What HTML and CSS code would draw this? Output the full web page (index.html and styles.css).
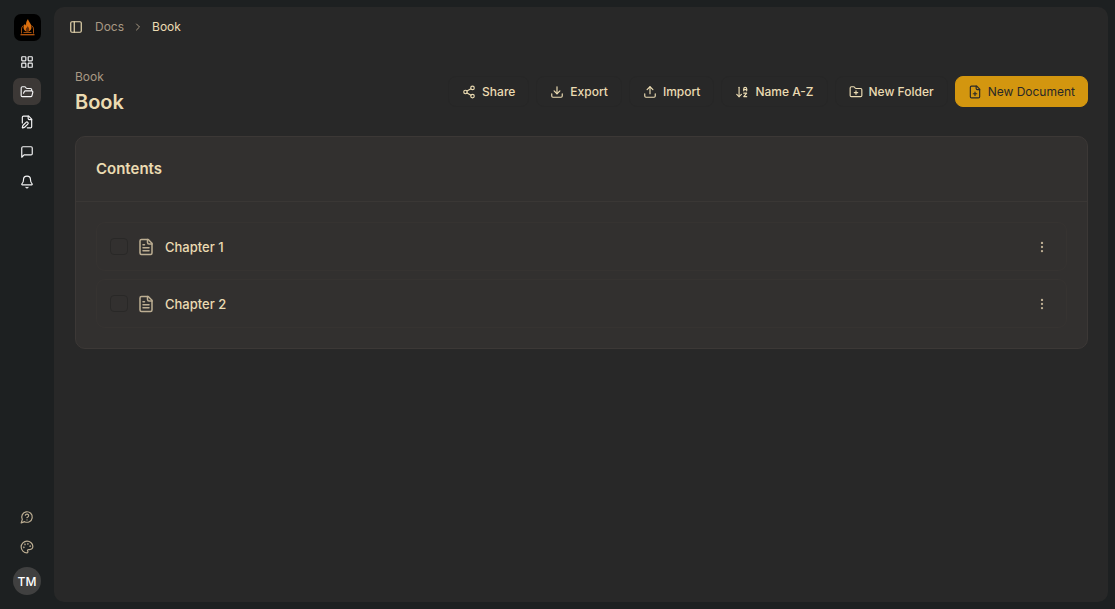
FILE: index.html
```
<!DOCTYPE html>
<html lang="en">
<head>
    <meta charset="UTF-8">
    <meta name="viewport" content="width=device-width, initial-scale=1.0">
    <title>Book</title>
    <link rel="stylesheet" href="styles.css">
</head>
<body>
    <div class="app">
        <aside class="sidebar">
            <a class="logo" href="#" aria-label="Home">
                <svg viewBox="0 0 27 27">
                    <path d="M7.500 19.500V15q0-2.500 2-3.500M19.500 19.500V15q0-2.500-2-3.500M9.500 18.500h8" fill="none" stroke="#a04c0c" stroke-width="1"/>
                    <path d="M6.500 20.700h14" stroke="#b8580e" stroke-width="1.300"/>
                    <path d="M14 5c.3 2.500 3.500 4.500 3.500 8.300 0 2.400-1.500 4.200-4 4.200s-4-1.700-4-4c0-1.800.8-2.800 1.500-3.800.3 1 .6 1.500 1.100 1.800C11.800 9 12.500 7 14 5z" fill="#dc700f"/>
                    <path d="M13.800 12c.2 1.200 1.400 1.800 1.400 3.400 0 1.200-.7 1.900-1.700 1.900s-1.700-.7-1.700-1.800c0-1.300 1.500-2 2-3.500z" fill="#6a3008"/>
                </svg>
            </a>
            <nav class="side-nav">
                <a class="side-link" href="#" aria-label="Dashboard">
                    <svg class="icon" viewBox="0 0 24 24"><rect width="7" height="7" x="3" y="3" rx="1"/><rect width="7" height="7" x="14" y="3" rx="1"/><rect width="7" height="7" x="14" y="14" rx="1"/><rect width="7" height="7" x="3" y="14" rx="1"/></svg>
                </a>
                <a class="side-link active" href="#" aria-label="Docs">
                    <svg class="icon" viewBox="0 0 24 24"><path d="m6 14 1.500-2.900A2 2 0 0 1 9.240 10H20a2 2 0 0 1 1.940 2.500l-1.540 6a2 2 0 0 1-1.950 1.500H4a2 2 0 0 1-2-2V5a2 2 0 0 1 2-2h3.900a2 2 0 0 1 1.690.9l.81 1.200a2 2 0 0 0 1.670.9H18a2 2 0 0 1 2 2v2"/></svg>
                </a>
                <a class="side-link" href="#" aria-label="Drafts">
                    <svg class="icon" viewBox="0 0 24 24"><path d="M12.500 22H18a2 2 0 0 0 2-2V7l-5-5H6a2 2 0 0 0-2 2v9.500"/><path d="M14 2v4a2 2 0 0 0 2 2h4"/><path d="M13.378 15.626a1 1 0 1 0-3.004-3.004l-5.010 5.012a2 2 0 0 0-.506.854l-.837 2.870a.5.5 0 0 0 .62.62l2.870-.837a2 2 0 0 0 .854-.506z"/></svg>
                </a>
                <a class="side-link" href="#" aria-label="Messages">
                    <svg class="icon" viewBox="0 0 24 24"><path d="M21 15a2 2 0 0 1-2 2H7l-4 4V5a2 2 0 0 1 2-2h14a2 2 0 0 1 2 2z"/></svg>
                </a>
                <a class="side-link" href="#" aria-label="Notifications">
                    <svg class="icon" viewBox="0 0 24 24"><path d="M10.268 21a2 2 0 0 0 3.464 0"/><path d="M3.262 15.326A1 1 0 0 0 4 17h16a1 1 0 0 0 .74-1.673C19.410 13.956 18 12.499 18 8A6 6 0 0 0 6 8c0 4.499-1.411 5.956-2.738 7.326"/></svg>
                </a>
            </nav>
            <div class="side-footer">
                <a class="side-link muted" href="#" aria-label="Help">
                    <svg class="icon" viewBox="0 0 24 24"><path d="M7.900 20A9 9 0 1 0 4 16.100L2 22Z"/><path d="M9.090 9a3 3 0 0 1 5.830 1c0 2-3 3-3 3"/><path d="M12 17h.01"/></svg>
                </a>
                <button class="side-link muted" type="button" aria-label="Theme">
                    <svg class="icon" viewBox="0 0 24 24"><circle cx="13.500" cy="6.500" r=".5"/><circle cx="17.500" cy="10.500" r=".5"/><circle cx="8.500" cy="7.500" r=".5"/><circle cx="6.500" cy="12.500" r=".5"/><path d="M12 2C6.500 2 2 6.500 2 12s4.500 10 10 10c.926 0 1.648-.746 1.648-1.688 0-.437-.18-.835-.437-1.125-.29-.289-.438-.652-.438-1.125a1.640 1.640 0 0 1 1.668-1.668h1.996c3.051 0 5.555-2.503 5.555-5.554C21.965 6.012 17.461 2 12 2z"/></svg>
                </button>
                <button class="avatar" type="button">TM</button>
            </div>
        </aside>

        <main class="main">
            <header class="topbar">
                <button class="toggle" type="button" aria-label="Toggle sidebar">
                    <svg class="icon" viewBox="0 0 24 24"><rect width="18" height="18" x="3" y="3" rx="2"/><path d="M9 3v18"/></svg>
                </button>
                <nav class="breadcrumb">
                    <a href="#">Docs</a>
                    <svg class="icon chevron" viewBox="0 0 24 24"><path d="m9 18 6-6-6-6"/></svg>
                    <span class="current">Book</span>
                </nav>
            </header>

            <div class="content">
                <div class="page-header">
                    <div class="page-title">
                        <p>Book</p>
                        <h1>Book</h1>
                    </div>
                    <div class="actions">
                        <button class="btn" type="button">
                            <svg class="icon" viewBox="0 0 24 24"><circle cx="18" cy="5" r="3"/><circle cx="6" cy="12" r="3"/><circle cx="18" cy="19" r="3"/><path d="m8.590 13.510 6.830 3.980M15.410 6.510l-6.820 3.980"/></svg>
                            Share
                        </button>
                        <button class="btn" type="button">
                            <svg class="icon" viewBox="0 0 24 24"><path d="M21 15v4a2 2 0 0 1-2 2H5a2 2 0 0 1-2-2v-4"/><path d="m7 10 5 5 5-5"/><path d="M12 15V3"/></svg>
                            Export
                        </button>
                        <button class="btn" type="button">
                            <svg class="icon" viewBox="0 0 24 24"><path d="M21 15v4a2 2 0 0 1-2 2H5a2 2 0 0 1-2-2v-4"/><path d="m17 8-5-5-5 5"/><path d="M12 3v12"/></svg>
                            Import
                        </button>
                        <button class="btn" type="button">
                            <svg class="icon" viewBox="0 0 24 24"><path d="m3 16 4 4 4-4"/><path d="M7 20V4"/><path d="M20 8h-5"/><path d="M15 10V6.500a2.500 2.500 0 0 1 5 0V10"/><path d="M15 14h5l-5 6h5"/></svg>
                            Name A-Z
                        </button>
                        <button class="btn" type="button">
                            <svg class="icon" viewBox="0 0 24 24"><path d="M12 10v6M9 13h6"/><path d="M20 20a2 2 0 0 0 2-2V8a2 2 0 0 0-2-2h-7.900a2 2 0 0 1-1.690-.9L9.600 3.900A2 2 0 0 0 7.930 3H4a2 2 0 0 0-2 2v13a2 2 0 0 0 2 2Z"/></svg>
                            New Folder
                        </button>
                        <button class="btn primary" type="button">
                            <svg class="icon" viewBox="0 0 24 24"><path d="M15 2H6a2 2 0 0 0-2 2v16a2 2 0 0 0 2 2h12a2 2 0 0 0 2-2V7Z"/><path d="M14 2v4a2 2 0 0 0 2 2h4"/><path d="M9 15h6M12 18v-6"/></svg>
                            New Document
                        </button>
                    </div>
                </div>

                <section class="card">
                    <h2>Contents</h2>
                    <ul class="doc-list">
                        <li class="doc">
                            <input type="checkbox" aria-label="Select Chapter 1">
                            <svg class="icon doc-icon" viewBox="0 0 24 24"><path d="M15 2H6a2 2 0 0 0-2 2v16a2 2 0 0 0 2 2h12a2 2 0 0 0 2-2V7Z"/><path d="M14 2v4a2 2 0 0 0 2 2h4"/><path d="M10 9H8M16 13H8M16 17H8"/></svg>
                            <a href="#">Chapter 1</a>
                            <button class="more" type="button" aria-label="More">
                                <svg class="icon" viewBox="0 0 24 24"><circle cx="12" cy="12" r="1"/><circle cx="12" cy="5" r="1"/><circle cx="12" cy="19" r="1"/></svg>
                            </button>
                        </li>
                        <li class="doc">
                            <input type="checkbox" aria-label="Select Chapter 2">
                            <svg class="icon doc-icon" viewBox="0 0 24 24"><path d="M15 2H6a2 2 0 0 0-2 2v16a2 2 0 0 0 2 2h12a2 2 0 0 0 2-2V7Z"/><path d="M14 2v4a2 2 0 0 0 2 2h4"/><path d="M10 9H8M16 13H8M16 17H8"/></svg>
                            <a href="#">Chapter 2</a>
                            <button class="more" type="button" aria-label="More">
                                <svg class="icon" viewBox="0 0 24 24"><circle cx="12" cy="12" r="1"/><circle cx="12" cy="5" r="1"/><circle cx="12" cy="19" r="1"/></svg>
                            </button>
                        </li>
                    </ul>
                </section>
            </div>
        </main>
    </div>
</body>
</html>
```
FILE: styles.css
```
* {
    box-sizing: border-box;
}
body {
    margin: 0;
    font-family: Inter, sans-serif;
    font-size: 12px;
    background: #1d2021;
    color: #ebdbb2;
}
a {
    color: inherit;
    text-decoration: none;
}
button {
    font: inherit;
    color: inherit;
    background: none;
    border: none;
    padding: 0;
    cursor: pointer;
}
.icon {
    width: 14px;
    height: 14px;
    flex-shrink: 0;
    fill: none;
    stroke: currentColor;
    stroke-width: 2;
    stroke-linecap: round;
    stroke-linejoin: round;
}
.app {
    display: flex;
    min-height: 100vh;
}

/* sidebar */
.sidebar {
    width: 54px;
    display: flex;
    flex-direction: column;
    align-items: center;
    padding: 14px 0;
    color: #f4f4f5;
}
.logo {
    width: 27px;
    height: 27px;
    border-radius: 7px;
    background: #000;
}
.logo svg {
    display: block;
}
.side-nav,
.side-footer {
    display: flex;
    flex-direction: column;
    gap: 3px;
}
.side-nav {
    margin-top: 7px;
}
.side-footer {
    margin-top: auto;
}
.side-link {
    width: 28px;
    height: 27px;
    display: flex;
    align-items: center;
    justify-content: center;
    border-radius: 7px;
}
.side-link.active {
    background: #3c3836;
}
.side-link.muted {
    color: #bdae93;
}
.avatar {
    width: 28px;
    height: 28px;
    margin-top: 4px;
    border-radius: 50%;
    background: #404040;
    color: #fff;
    font-weight: 500;
}

/* main panel */
.main {
    flex: 1;
    margin: 7px 7px 7px 0;
    border-radius: 10px;
    background: #282828;
}
.topbar {
    display: flex;
    align-items: center;
    gap: 12px;
    height: 39px;
    padding: 0 15px;
}
.toggle {
    display: flex;
}
.breadcrumb {
    display: flex;
    align-items: center;
    gap: 8px;
    color: #a89984;
}
.chevron {
    width: 12px;
    height: 12px;
}
.current {
    color: #ebdbb2;
}
.content {
    padding: 21px 20px 20px 21px;
}
.page-header {
    display: flex;
    align-items: center;
    justify-content: space-between;
    height: 49px;
    margin-bottom: 20px;
}
.page-title {
    padding-top: 2px;
}
.page-title p {
    margin: 0;
    line-height: 20px;
    color: #a89984;
}
.page-title h1 {
    margin: 0;
    font-size: 20px;
    font-weight: 600;
    line-height: 31px;
}
.actions {
    display: flex;
    gap: 7px;
}
.btn {
    display: flex;
    align-items: center;
    gap: 6px;
    height: 31px;
    padding: 0 13px;
    border: 1px solid #262626;
    border-radius: 8px;
    font-weight: 500;
    white-space: nowrap;
}
.btn.primary {
    padding: 0 12px;
    background: #d3960f;
    border-color: #d3960f;
    color: #282828;
    font-weight: 400;
}

/* document list */
.card {
    background: #32302f;
    border: 1px solid #3c3836;
    border-radius: 10px;
}
.card h2 {
    margin: 0;
    padding: 0 20px;
    font-size: 15px;
    font-weight: 600;
    line-height: 64px;
    border-bottom: 1px solid #3a3735;
}
.doc-list {
    list-style: none;
    margin: 0;
    padding: 20px;
    display: flex;
    flex-direction: column;
    gap: 8px;
}
.doc {
    display: flex;
    align-items: center;
    height: 49px;
    padding: 0 14px 0 13px;
    border: 1px solid #363331;
    border-radius: 9px;
    font-size: 13px;
    font-weight: 500;
}
.doc input {
    appearance: none;
    width: 18px;
    height: 17px;
    margin: 0;
    border: 1px solid #292827;
    border-radius: 4px;
}
.doc-icon {
    width: 18px;
    height: 18px;
    margin: 0 10px 0 9px;
    color: #bdae93;
}
.more {
    width: 21px;
    height: 28px;
    margin-left: auto;
    display: flex;
    align-items: center;
    justify-content: center;
    color: #bdae93;
}
```
